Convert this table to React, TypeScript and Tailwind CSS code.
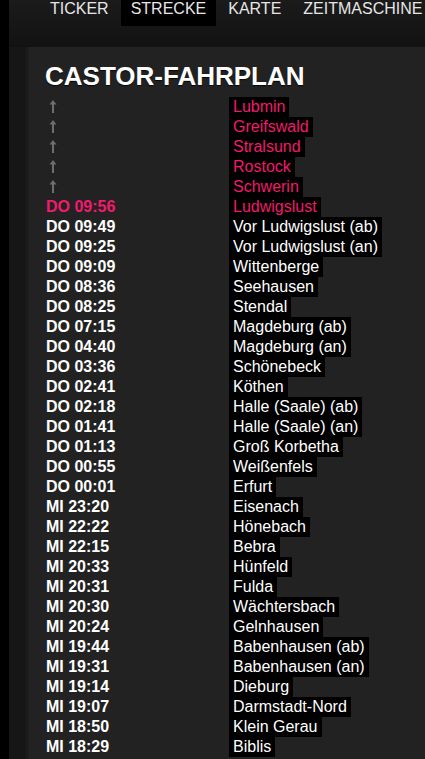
const stops: [string | null, string, boolean?][] = [
  [null, "Lubmin", true],
  [null, "Greifswald", true],
  [null, "Stralsund", true],
  [null, "Rostock", true],
  [null, "Schwerin", true],
  ["DO 09:56", "Ludwigslust", true],
  ["DO 09:49", "Vor Ludwigslust (ab)"],
  ["DO 09:25", "Vor Ludwigslust (an)"],
  ["DO 09:09", "Wittenberge"],
  ["DO 08:36", "Seehausen"],
  ["DO 08:25", "Stendal"],
  ["DO 07:15", "Magdeburg (ab)"],
  ["DO 04:40", "Magdeburg (an)"],
  ["DO 03:36", "Schönebeck"],
  ["DO 02:41", "Köthen"],
  ["DO 02:18", "Halle (Saale) (ab)"],
  ["DO 01:41", "Halle (Saale) (an)"],
  ["DO 01:13", "Groß Korbetha"],
  ["DO 00:55", "Weißenfels"],
  ["DO 00:01", "Erfurt"],
  ["MI 23:20", "Eisenach"],
  ["MI 22:22", "Hönebach"],
  ["MI 22:15", "Bebra"],
  ["MI 20:33", "Hünfeld"],
  ["MI 20:31", "Fulda"],
  ["MI 20:30", "Wächtersbach"],
  ["MI 20:24", "Gelnhausen"],
  ["MI 19:44", "Babenhausen (ab)"],
  ["MI 19:31", "Babenhausen (an)"],
  ["MI 19:14", "Dieburg"],
  ["MI 19:07", "Darmstadt-Nord"],
  ["MI 18:50", "Klein Gerau"],
  ["MI 18:29", "Biblis"],
];

const tabs = ["TICKER", "STRECKE", "KARTE", "ZEITMASCHINE"];

// small grey "earlier stop" arrow
const UpArrow = () => (
  <svg width="10" height="20" viewBox="0 0 10 20" className="ml-[2px]">
    <path d="M5 3 L1.5 7.5 H4 V16 H6 V7.5 H8.5 Z" fill="#6e6e6e" />
  </svg>
);

export default function App() {
  return (
    <div className="h-[759px] w-[425px] overflow-hidden bg-black pl-[9px] font-['Liberation_Sans',Arial,sans-serif]">
      <div className="flex h-full flex-col bg-[#161616]">
        {/* tab bar */}
        <div className="h-[47px] bg-gradient-to-b from-[#1b1b1b] to-[#121212] pl-[31px]">
          <div className="flex gap-[2px] whitespace-nowrap">
            {tabs.map((t) => (
              <div
                key={t}
                className={`h-[26px] px-[10px] text-[16px] leading-[18px] text-[#e6e6e6] ${
                  t === "STRECKE" ? "bg-black" : ""
                }`}
              >
                {t}
              </div>
            ))}
          </div>
        </div>

        <div className="flex flex-1 pl-[17px]">
          <div className="w-[3px] bg-[#1c1c1c]" />
          <div className="flex-1 bg-[#222222] pl-[16px] pt-[14px]">
            <h1 className="mb-[6px] text-[26px] font-bold leading-[30px] text-white [text-shadow:0_1px_1px_rgba(0,0,0,0.8)]">
              CASTOR-FAHRPLAN
            </h1>
            <div className="flex flex-col">
              {stops.map(([time, name, pink]) => (
                <div key={name} className="flex h-[20px] text-[16px] leading-[20px]">
                  <div className="w-[184px] shrink-0 pl-[1px]">
                    {time ? (
                      <span className={`font-bold ${pink ? "text-[#f21a6c]" : "text-white"}`}>
                        {time}
                      </span>
                    ) : (
                      <UpArrow />
                    )}
                  </div>
                  <span
                    className={`whitespace-nowrap bg-black px-[4px] ${
                      pink ? "text-[#f21a6c]" : "text-white"
                    }`}
                  >
                    {name}
                  </span>
                </div>
              ))}
            </div>
          </div>
        </div>
      </div>
    </div>
  );
}
